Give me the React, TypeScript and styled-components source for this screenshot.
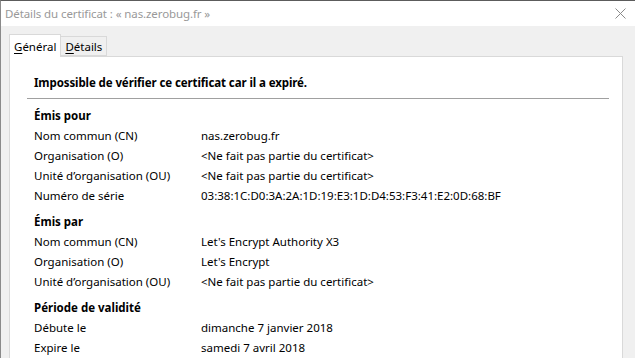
import React from 'react';
import styled, { createGlobalStyle } from 'styled-components';

const GlobalStyle = createGlobalStyle`
  html, body {
    margin: 0;
    padding: 0;
    background: #f0f0f0;
    overflow: hidden;
  }
  body {
    font-family: "Noto Sans", "Liberation Sans", sans-serif;
    font-size: 11.5px;
    color: #000;
  }
`;

const Window = styled.div`
  width: 635px;
  height: 358px;
  box-sizing: border-box;
  border-top: 1px solid #5c5c5c;
  border-left: 1px solid #8a8a8a;
  background: #f0f0f0;
  display: flex;
  flex-direction: column;
  overflow: hidden;
`;

const TitleBar = styled.div`
  height: 25px;
  flex: none;
  background: #fff;
  display: flex;
  align-items: center;
  justify-content: space-between;
  padding: 0 8px 0 4px;
`;

const Title = styled.span`
  color: #999;
  font-size: 11.5px;
  letter-spacing: -0.1px;
`;

const CloseButton = styled.span`
  display: flex;
  width: 11px;
  height: 11px;
  margin-right: 1px;
`;

const Body = styled.div`
  flex: 1;
  padding: 8px 12px 0 8px;
  display: flex;
  flex-direction: column;
`;

const TabStrip = styled.div`
  display: flex;
  align-items: flex-end;
  height: 22px;
  flex: none;
`;

const Tab = styled.div<{ $active?: boolean }>`
  box-sizing: border-box;
  height: ${(p) => (p.$active ? '23px' : '20px')};
  padding: ${(p) => (p.$active ? '0 4px' : '0 4px')};
  margin-bottom: ${(p) => (p.$active ? '-1px' : '0')};
  background: ${(p) => (p.$active ? '#fff' : '#f0f0f0')};
  border: 1px solid #d9d9d9;
  border-bottom: ${(p) => (p.$active ? 'none' : '1px solid #d9d9d9')};
  border-left: ${(p) => (p.$active ? '1px solid #d9d9d9' : 'none')};
  display: flex;
  align-items: center;
  position: relative;
  z-index: ${(p) => (p.$active ? 1 : 0)};
  u {
    text-decoration-thickness: 1px;
    text-underline-offset: 2px;
  }
`;

const Panel = styled.div`
  flex: 1;
  background: #fff;
  border: 1px solid #d9d9d9;
  border-bottom: none;
  padding: 16px 13px 0 17px;
`;

const Warning = styled.div`
  font-weight: bold;
  line-height: 20px;
  padding-left: 7px;
  letter-spacing: -0.1px;
`;

const Separator = styled.hr`
  border: none;
  border-top: 1px solid #a0a0a0;
  margin: 5px 0 6px;
`;

const Section = styled.div`
  display: grid;
  grid-template-columns: 167px 1fr;
  grid-auto-rows: 20px;
  align-items: center;
  padding-left: 7px;
  margin-bottom: 6px;
`;

const SectionTitle = styled.div`
  grid-column: 1 / span 2;
  font-weight: bold;
`;

const Cell = styled.div`
  white-space: nowrap;
`;

type Row = [string, string];

const sections: { title: string; rows: Row[] }[] = [
  {
    title: 'Émis pour',
    rows: [
      ['Nom commun (CN)', 'nas.zerobug.fr'],
      ['Organisation (O)', '<Ne fait pas partie du certificat>'],
      ['Unité d’organisation (OU)', '<Ne fait pas partie du certificat>'],
      ['Numéro de série', '03:38:1C:D0:3A:2A:1D:19:E3:1D:D4:53:F3:41:E2:0D:68:BF'],
    ],
  },
  {
    title: 'Émis par',
    rows: [
      ['Nom commun (CN)', "Let's Encrypt Authority X3"],
      ['Organisation (O)', "Let's Encrypt"],
      ['Unité d’organisation (OU)', '<Ne fait pas partie du certificat>'],
    ],
  },
  {
    title: 'Période de validité',
    rows: [
      ['Débute le', 'dimanche 7 janvier 2018'],
      ['Expire le', 'samedi 7 avril 2018'],
    ],
  },
];

export default function App() {
  return (
    <>
      <GlobalStyle />
      <Window>
        <TitleBar>
          <Title>Détails du certificat : « nas.zerobug.fr »</Title>
          <CloseButton>
            <svg width="11" height="11" viewBox="0 0 11 11">
              <path d="M0.5 0.5 L10.5 10.5 M10.5 0.5 L0.5 10.5" stroke="#8a8a8a" strokeWidth="1" />
            </svg>
          </CloseButton>
        </TitleBar>
        <Body>
          <TabStrip>
            <Tab $active>
              <span><u>G</u>énéral</span>
            </Tab>
            <Tab>
              <span><u>D</u>étails</span>
            </Tab>
          </TabStrip>
          <Panel>
            <Warning>Impossible de vérifier ce certificat car il a expiré.</Warning>
            <Separator />
            {sections.map((s) => (
              <Section key={s.title}>
                <SectionTitle>{s.title}</SectionTitle>
                {s.rows.map(([label, value]) => (
                  <React.Fragment key={label}>
                    <Cell>{label}</Cell>
                    <Cell>{value}</Cell>
                  </React.Fragment>
                ))}
              </Section>
            ))}
          </Panel>
        </Body>
      </Window>
    </>
  );
}
